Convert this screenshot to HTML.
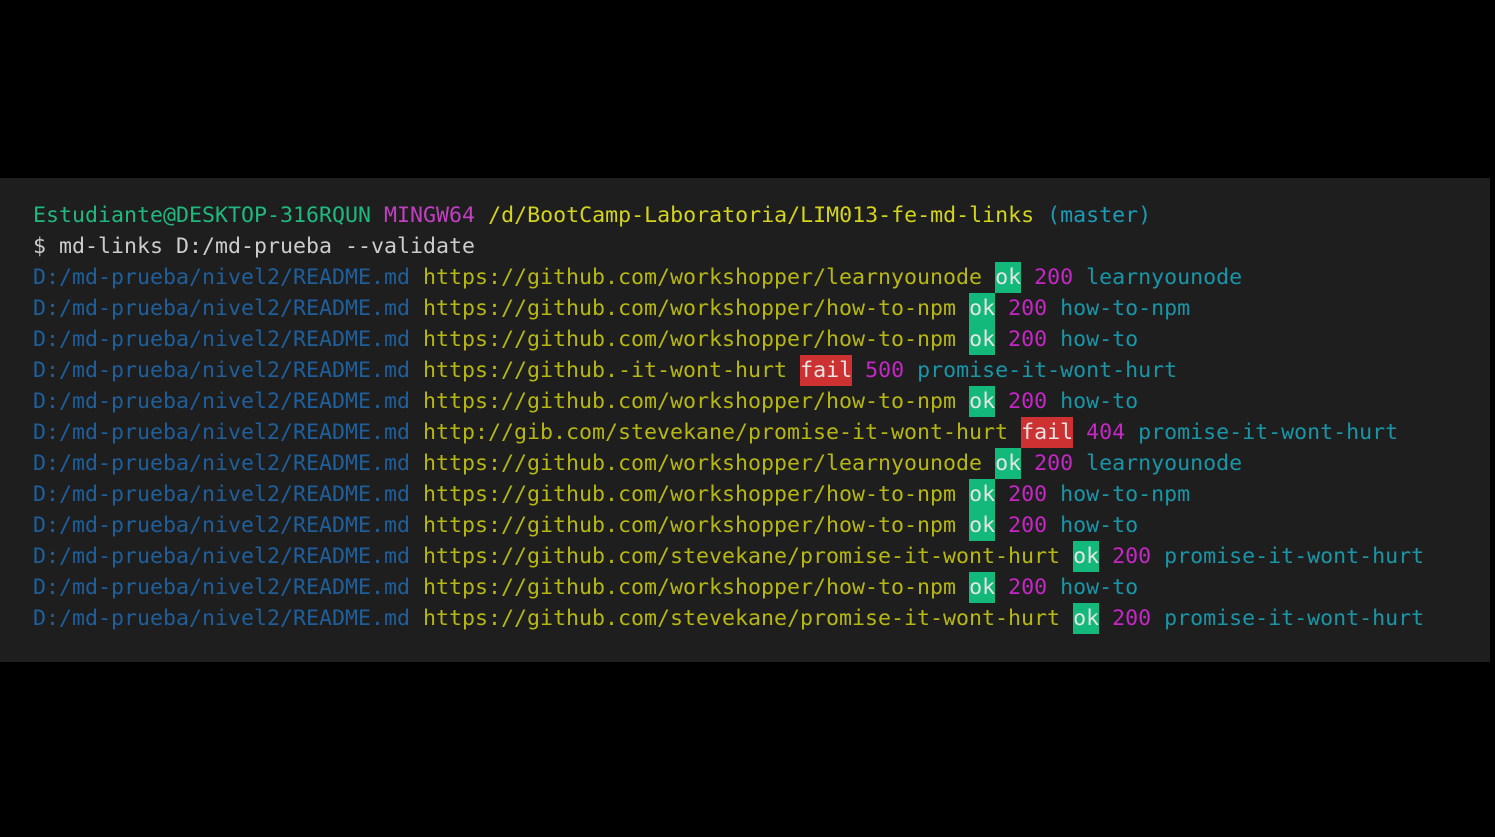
<!DOCTYPE html>
<html><head><meta charset="utf-8"><style>
html,body{margin:0;padding:0;background:#000;width:1495px;height:837px;overflow:hidden}
.p{position:absolute;left:0;top:178px;width:1490px;height:484px;background:#1e1e1e}
.t{position:absolute;left:33px;top:200px;font-family:"DejaVu Sans Mono","Liberation Mono",monospace;font-size:21.6px;line-height:31px;white-space:pre;color:#cccccc}
.g{color:#1fb980}.m{color:#c23fc2}.y{color:#d4d41a}.c{color:#1a9bb8}
.f{color:#1e5f9c}.u{color:#b7b712}.k,.x{display:inline-block;height:31px;vertical-align:top;color:#e5e5e5}.k{background:#12b97b}.x{background:#cd3131}
.n{color:#c527c5}.h{color:#1896a8}
</style></head><body><div class="p"></div><div class="t"><span class="g">Estudiante@DESKTOP-316RQUN</span> <span class="m">MINGW64</span> <span class="y">/d/BootCamp-Laboratoria/LIM013-fe-md-links</span> <span class="c">(master)</span>
$ md-links D:/md-prueba --validate
<span class="f">D:/md-prueba/nivel2/README.md</span> <span class="u">https://github.com/workshopper/learnyounode</span> <span class="k">ok</span> <span class="n">200</span> <span class="h">learnyounode</span>
<span class="f">D:/md-prueba/nivel2/README.md</span> <span class="u">https://github.com/workshopper/how-to-npm</span> <span class="k">ok</span> <span class="n">200</span> <span class="h">how-to-npm</span>
<span class="f">D:/md-prueba/nivel2/README.md</span> <span class="u">https://github.com/workshopper/how-to-npm</span> <span class="k">ok</span> <span class="n">200</span> <span class="h">how-to</span>
<span class="f">D:/md-prueba/nivel2/README.md</span> <span class="u">https://github.-it-wont-hurt</span> <span class="x">fail</span> <span class="n">500</span> <span class="h">promise-it-wont-hurt</span>
<span class="f">D:/md-prueba/nivel2/README.md</span> <span class="u">https://github.com/workshopper/how-to-npm</span> <span class="k">ok</span> <span class="n">200</span> <span class="h">how-to</span>
<span class="f">D:/md-prueba/nivel2/README.md</span> <span class="u">http://gib.com/stevekane/promise-it-wont-hurt</span> <span class="x">fail</span> <span class="n">404</span> <span class="h">promise-it-wont-hurt</span>
<span class="f">D:/md-prueba/nivel2/README.md</span> <span class="u">https://github.com/workshopper/learnyounode</span> <span class="k">ok</span> <span class="n">200</span> <span class="h">learnyounode</span>
<span class="f">D:/md-prueba/nivel2/README.md</span> <span class="u">https://github.com/workshopper/how-to-npm</span> <span class="k">ok</span> <span class="n">200</span> <span class="h">how-to-npm</span>
<span class="f">D:/md-prueba/nivel2/README.md</span> <span class="u">https://github.com/workshopper/how-to-npm</span> <span class="k">ok</span> <span class="n">200</span> <span class="h">how-to</span>
<span class="f">D:/md-prueba/nivel2/README.md</span> <span class="u">https://github.com/stevekane/promise-it-wont-hurt</span> <span class="k">ok</span> <span class="n">200</span> <span class="h">promise-it-wont-hurt</span>
<span class="f">D:/md-prueba/nivel2/README.md</span> <span class="u">https://github.com/workshopper/how-to-npm</span> <span class="k">ok</span> <span class="n">200</span> <span class="h">how-to</span>
<span class="f">D:/md-prueba/nivel2/README.md</span> <span class="u">https://github.com/stevekane/promise-it-wont-hurt</span> <span class="k">ok</span> <span class="n">200</span> <span class="h">promise-it-wont-hurt</span></div></body></html>
